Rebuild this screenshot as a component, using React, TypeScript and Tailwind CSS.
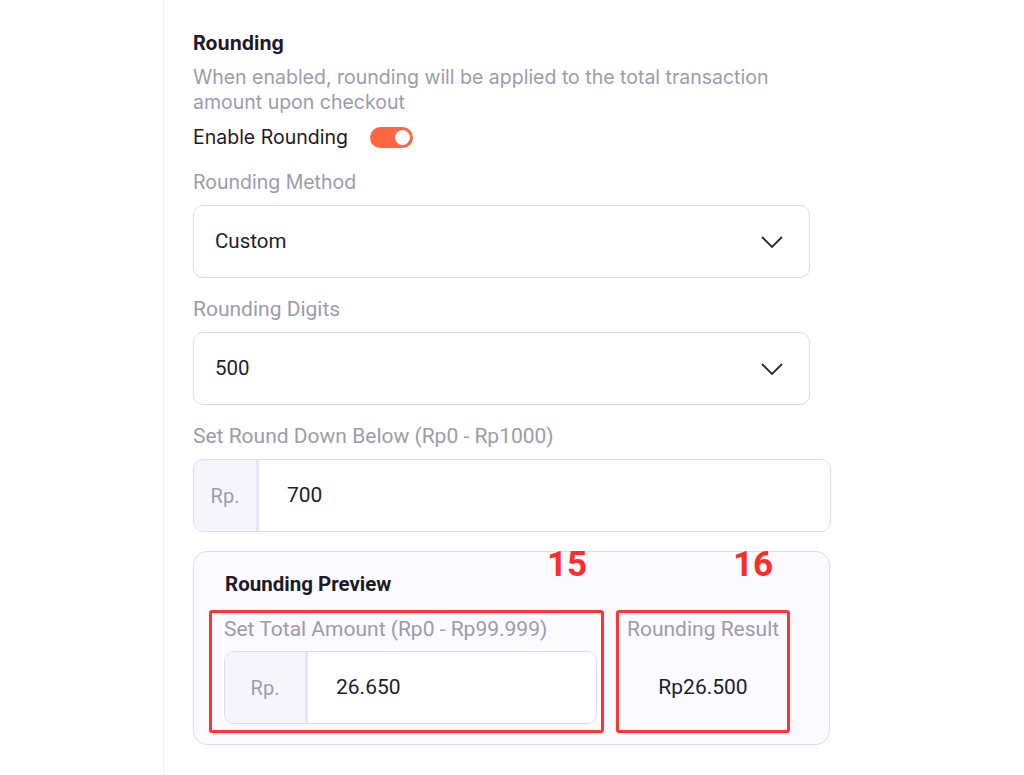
function Label({ children }: { children: React.ReactNode }) {
  return <div className="text-[21px] leading-[25px] text-[#9d9bad] font-['Roboto',sans-serif]">{children}</div>;
}

function Select({ value }: { value: string }) {
  return (
    <div className="mt-[10px] w-[617px] h-[73px] rounded-[10px] border border-[#dddbf3] bg-white flex items-center justify-between pl-[21px] pr-[26px]">
      <span className="text-[20.5px] text-[#1f1d2b] font-['Roboto',sans-serif]">{value}</span>
      <svg width="22" height="12" viewBox="0 0 22 12" fill="none">
        <polyline points="1,1 11,11 21,1" stroke="#2a2838" strokeWidth="1.8" />
      </svg>
    </div>
  );
}

function PrefixInput({ value, wide, className }: { value: string; wide: number; className?: string }) {
  return (
    <div className={`flex h-[73px] rounded-[10px] border border-[#dddbf3] overflow-hidden bg-white ${className ?? ''}`}>
      <div
        className="flex items-center justify-center bg-[#f6f5fb] border-r-[3px] border-[#e6e4f5] text-[20px] text-[#9d9bad] font-['Roboto',sans-serif]"
        style={{ width: wide }}
      >
        Rp.
      </div>
      <div className="flex items-center pl-[28px] text-[21px] text-[#1f1d2b] font-['Roboto',sans-serif]">{value}</div>
    </div>
  );
}

export default function App() {
  return (
    <div className="min-h-screen bg-white flex font-['Inter',sans-serif]">
      <div className="w-[164px] shrink-0 border-r border-[#f1f1f3]" />
      <div className="pl-[29px] pt-[31px] w-[668px]">
        <h2 className="text-[19.5px] leading-[24px] font-bold text-[#1c1a29]">Rounding</h2>
        <p className="mt-[10px] text-[19.5px] leading-[25px] text-[#9d9bad]">
          When enabled, rounding will be applied to the total transaction
          <br />
          amount upon checkout
        </p>
        <div className="mt-[10px] flex items-center gap-[22px]">
          <span className="text-[19.5px] leading-[25px] text-[#1c1a29]">Enable Rounding</span>
          <div className="w-[43px] h-[21px] rounded-full bg-[#ff6641] flex items-center justify-end pr-[3px]">
            <div className="w-[15px] h-[15px] rounded-full bg-white" />
          </div>
        </div>

        <div className="mt-[20px]">
          <div className="text-[19.5px] leading-[25px] text-[#9d9bad]">Rounding Method</div>
          <Select value="Custom" />
        </div>

        <div className="mt-[19px]">
          <Label>Rounding Digits</Label>
          <Select value="500" />
        </div>

        <div className="mt-[19px]">
          <Label>Set Round Down Below (Rp0 - Rp1000)</Label>
          <PrefixInput className="mt-[10px] w-[638px]" value="700" wide={65} />
        </div>

        <div className="relative mt-[19px] w-[637px] rounded-[14px] border border-[#dddbf3] bg-[#fbfaff] pt-[20px] pb-[11px] pl-[15px]">
          <div className="pl-[16px] text-[20.5px] leading-[24px] font-bold text-[#1c1a29] font-['Roboto',sans-serif]">Rounding Preview</div>
          <span className="absolute left-[353px] top-[-13px] text-[35px] font-bold text-[#ff2b2b] font-['Roboto',sans-serif]">15</span>
          <span className="absolute left-[539px] top-[-13px] text-[35px] font-bold text-[#ff2b2b] font-['Roboto',sans-serif]">16</span>
          <div className="mt-[14px] flex gap-[12px]">
            <div className="w-[395px] h-[123px] border-[3px] border-[#ff3434] rounded-[3px] pl-[12px] pr-[4px] pt-[4px]">
              <Label>Set Total Amount (Rp0 - Rp99.999)</Label>
              <PrefixInput className="mt-[9px] h-[72px]" value="26.650" wide={83} />
            </div>
            <div className="w-[174px] h-[123px] border-[3px] border-[#ff3434] rounded-[3px] pl-[8px] pt-[4px]">
              <Label>Rounding Result</Label>
              <div className="mt-[33px] pr-[8px] text-center text-[21px] leading-[25px] text-[#1f1d2b] font-['Roboto',sans-serif]">
                Rp26.500
              </div>
            </div>
          </div>
        </div>
      </div>
    </div>
  );
}
